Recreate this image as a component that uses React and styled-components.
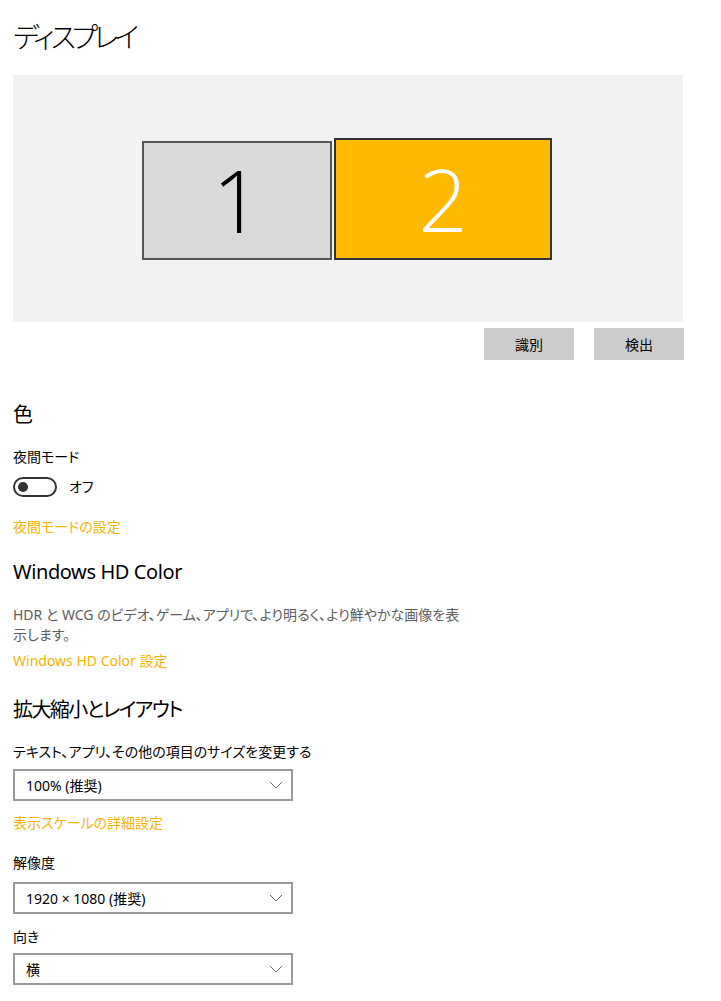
import React from 'react'
import styled, { createGlobalStyle } from 'styled-components'

const GlobalStyle = createGlobalStyle`
  body {
    margin: 0;
    background: #fff;
    font-family: "Noto Sans", "Noto Sans CJK JP", sans-serif;
    font-feature-settings: "palt";
    color: #000;
  }
`

const Page = styled.div`
  width: 721px;
  padding: 16px 0 0 13px;
  box-sizing: border-box;
`

const Title = styled.h1`
  margin: 0;
  font-family: "Noto Sans CJK JP", sans-serif;
  font-size: 28px;
  font-weight: 300;
  line-height: 40px;
  letter-spacing: -4px;
`

const Arrangement = styled.div`
  margin-top: 19px;
  width: 670px;
  height: 247px;
  background: #f2f2f2;
  display: flex;
  align-items: center;
  justify-content: center;
`

const Monitors = styled.div`
  display: flex;
  align-items: flex-end;
  gap: 2px;
  margin-left: -2px;
`

const Monitor = styled.div`
  width: ${p => p.$w}px;
  height: ${p => p.$h}px;
  box-sizing: border-box;
  border: 2px solid ${p => (p.$active ? '#333' : '#555')};
  background: ${p => (p.$active ? '#ffb900' : '#d9d9d9')};
  color: ${p => (p.$active ? '#fff' : '#000')};
  display: flex;
  align-items: center;
  justify-content: center;
  font-family: "Open Sans", sans-serif;
  font-weight: 300;
  font-size: 86px;
  line-height: 1;
`

const ButtonRow = styled.div`
  margin-top: 6px;
  width: 671px;
  display: flex;
  justify-content: flex-end;
  gap: 20px;
`

const Button = styled.button`
  width: 90px;
  height: 32px;
  border: none;
  background: #cccccc;
  font-family: "Noto Sans CJK JP", sans-serif;
  font-size: 14px;
  color: #000;
  padding: 0;
`

const Heading = styled.h2`
  margin: ${p => p.$mt}px 0 0;
  font-family: "Noto Sans", "Noto Sans CJK JP", sans-serif;
  font-size: 20px;
  font-weight: 400;
  line-height: 28px;
  letter-spacing: ${p => (p.$cjk ? '-1.6px' : '-0.4px')};
`

const Label = styled.div`
  margin-top: ${p => p.$mt}px;
  font-size: 14px;
  line-height: 20px;
  color: ${p => (p.$muted ? '#5d5d5d' : '#000')};
  max-width: ${p => (p.$wrap ? '452px' : 'none')};
`

const TextLink = styled.a`
  display: block;
  margin-top: ${p => p.$mt}px;
  font-size: 14px;
  line-height: 20px;
  color: #f5b400;
  text-decoration: none;
  cursor: pointer;
`

const ToggleRow = styled.div`
  margin-top: ${p => p.$mt}px;
  display: flex;
  align-items: center;
  gap: 12px;
  font-size: 14px;
  line-height: 20px;
`

const Switch = styled.div`
  width: 44px;
  height: 20px;
  box-sizing: border-box;
  border: 2px solid #333;
  border-radius: 10px;
  display: flex;
  align-items: center;
  padding-left: 3px;
  &::before {
    content: '';
    width: 10px;
    height: 10px;
    border-radius: 50%;
    background: #333;
  }
`

const Select = styled.div`
  margin-top: ${p => p.$mt}px;
  width: 280px;
  height: 32px;
  box-sizing: border-box;
  border: 2px solid #999;
  display: flex;
  align-items: center;
  justify-content: space-between;
  padding: 0 8px 0 11px;
  font-size: 14px;
`

const Chevron = () => (
  <svg width="14" height="8" viewBox="0 0 14 8" fill="none">
    <path d="M1 1l6 6 6-6" stroke="#666" strokeWidth="1" />
  </svg>
)

export default function App() {
  return (
    <>
      <GlobalStyle />
      <Page>
        <Title>ディスプレイ</Title>
        <Arrangement>
          <Monitors>
            <Monitor $w={190} $h={119}>1</Monitor>
            <Monitor $w={218} $h={122} $active>2</Monitor>
          </Monitors>
        </Arrangement>
        <ButtonRow>
          <Button>識別</Button>
          <Button>検出</Button>
        </ButtonRow>

        <Heading $mt={41} $cjk>色</Heading>
        <Label $mt={18}>夜間モード</Label>
        <ToggleRow $mt={10}>
          <Switch />
          <span>オフ</span>
        </ToggleRow>
        <TextLink $mt={20}>夜間モードの設定</TextLink>

        <Heading $mt={21}>Windows HD Color</Heading>
        <Label $mt={19} $muted $wrap>
          HDR と WCG のビデオ、ゲーム、アプリで、より明るく、より鮮やかな画像を表示します。
        </Label>
        <TextLink $mt={6}>Windows HD Color 設定</TextLink>

        <Heading $mt={25} $cjk>拡大縮小とレイアウト</Heading>
        <Label $mt={18}>テキスト、アプリ、その他の項目のサイズを変更する</Label>
        <Select $mt={7}>
          <span>100% (推奨)</span>
          <Chevron />
        </Select>
        <TextLink $mt={12}>表示スケールの詳細設定</TextLink>

        <Label $mt={20}>解像度</Label>
        <Select $mt={9}>
          <span>1920 × 1080 (推奨)</span>
          <Chevron />
        </Select>
        <Label $mt={13}>向き</Label>
        <Select $mt={6}>
          <span>横</span>
          <Chevron />
        </Select>
      </Page>
    </>
  )
}
